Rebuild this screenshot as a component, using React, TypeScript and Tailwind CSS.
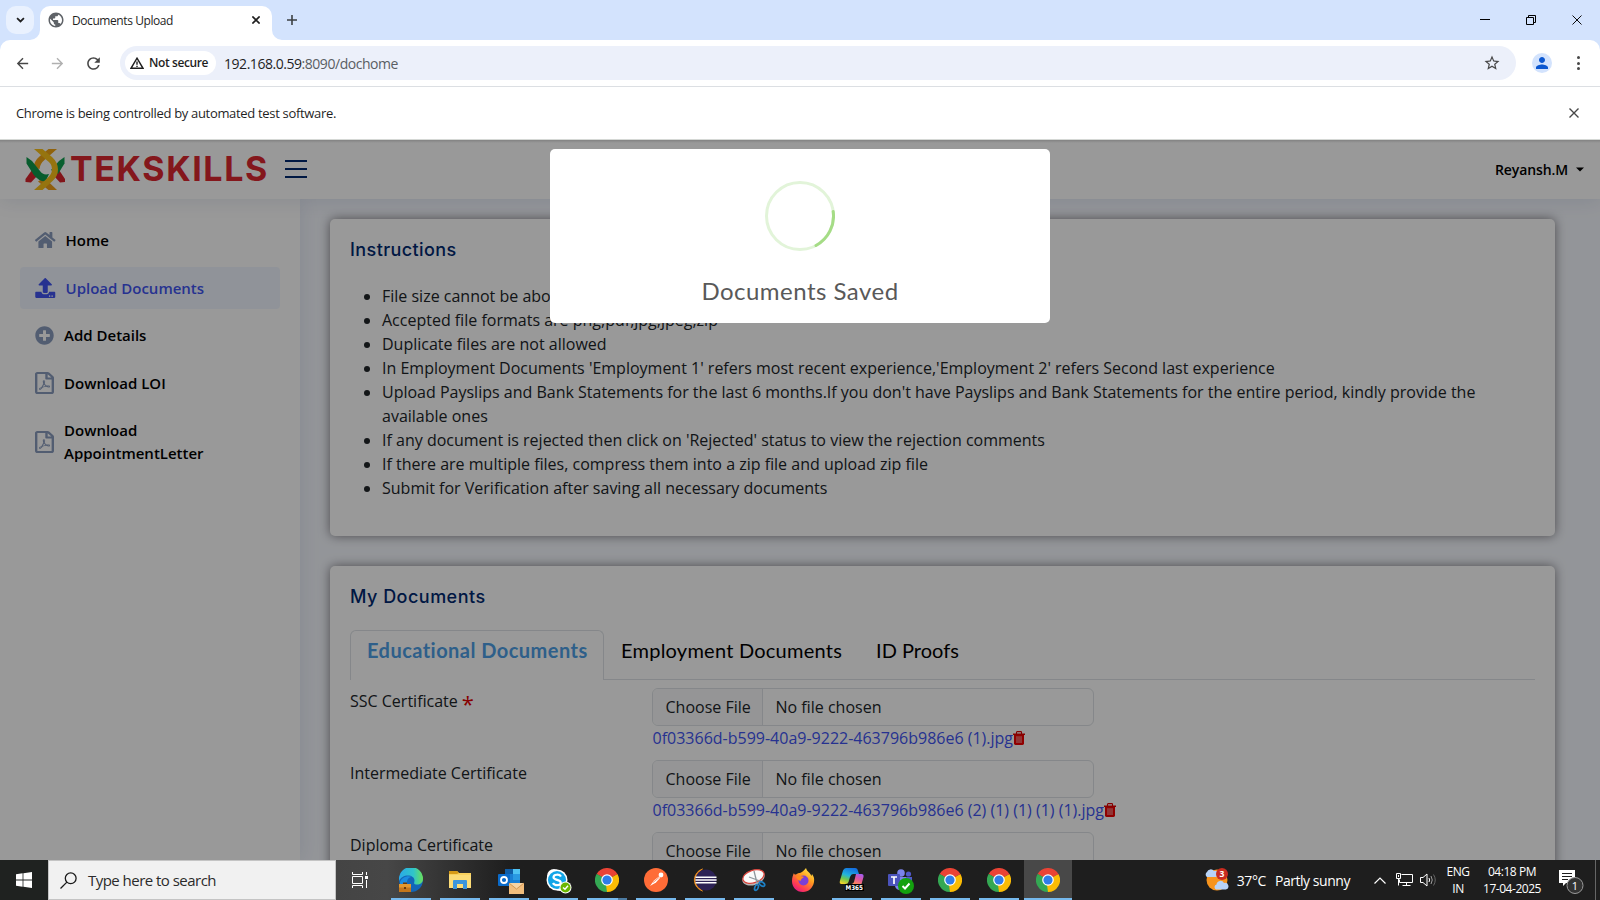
import type { ReactNode } from "react";
import { FaHome, FaUpload, FaPlusCircle, FaRegFilePdf } from "react-icons/fa";
import { MdArrowBack, MdArrowForward, MdRefresh, MdStarBorder, MdPerson, MdPublic } from "react-icons/md";

/* ---------- Browser chrome ---------- */

function Cross({ size, stroke, color }: { size: number; stroke: number; color: string }) {
  return (
    <svg width={size} height={size} viewBox="0 0 10 10" fill="none" stroke={color} strokeWidth={stroke}>
      <path d="M0.5 0.5 9.5 9.5M9.5 0.5 0.5 9.5" />
    </svg>
  );
}

function TabStrip() {
  return (
    <div className="flex h-10 shrink-0 items-start bg-[#d3e3fd]">
      <div className="mt-1.5 ml-1.5 flex h-7 w-7 items-center justify-center rounded-[10px] bg-[#e9f1fe]">
        <svg width="9" height="6" viewBox="0 0 10 7" fill="none" stroke="#1f1f1f" strokeWidth="2">
          <path d="M1 1.2 5 5.2 9 1.2" />
        </svg>
      </div>
      <svg className="mt-[30px] -ml-1 h-2.5 w-2.5" viewBox="0 0 10 10" fill="#fff">
        <path d="M10 0V10H0A10 10 0 0 0 10 0Z" />
      </svg>
      <div className="mt-1.5 flex h-[34px] w-[232px] items-center rounded-t-[10px] bg-white pl-[7px] pb-1.5">
        <MdPublic className="h-[18px] w-[18px] text-[#5f6368]" />
        <span className="ml-[7px] w-[180px] pt-0.5 text-[12px] tracking-[-0.42px] text-[#1f1f1f]">Documents Upload</span>
        <Cross size={8} stroke={2} color="#1f1f1f" />
      </div>
      <svg className="mt-[30px] h-2.5 w-2.5" viewBox="0 0 10 10" fill="#fff">
        <path d="M0 0V10H10A10 10 0 0 1 0 0Z" />
      </svg>
      <svg className="mt-[15px] ml-[5px]" width="10" height="10" viewBox="0 0 10 10" stroke="#3c4043" strokeWidth="1.6">
        <path d="M5 0V10M0 5H10" />
      </svg>
      <div className="mt-[15px] ml-auto flex items-center gap-9 pr-[18px]">
        <svg width="10" height="10" viewBox="0 0 10 10" stroke="#000">
          <path d="M0 4.5H10" />
        </svg>
        <svg width="10" height="10" viewBox="0 0 10 10" fill="none" stroke="#000">
          <path d="M0.5 2.5H7.5V9.5H0.5ZM2.5 2.5V0.5H9.5V7.5H7.5" />
        </svg>
        <Cross size={10} stroke={0.95} color="#000" />
      </div>
    </div>
  );
}

function Toolbar() {
  return (
    <div className="h-[46px] shrink-0 bg-[#d3e3fd]">
      <div className="flex h-[46px] items-center rounded-t-[10px] bg-white">
        <MdArrowBack className="ml-3.5 h-[17px] w-[17px] text-[#474747]" />
        <MdArrowForward className="ml-[18px] h-[17px] w-[17px] text-[#b0b0b0]" />
        <MdRefresh className="ml-[18px] h-[19px] w-[19px] text-[#474747]" />
        <div className="ml-[17px] flex h-[34px] w-[1396px] items-center rounded-full bg-[#ecf0fa] px-[5px]">
          <div className="flex h-6 w-[91px] items-center rounded-full bg-white pl-[5px]">
            <svg width="14" height="12" viewBox="0 0 14 12" fill="none" stroke="#1f1f1f" strokeWidth="1.4">
              <path d="M7 1.2 13 11.3H1ZM7 4.4V7.8M7 8.7V10" />
            </svg>
            <span className="ml-[5px] text-[12px] font-semibold tracking-[-0.4px] text-[#1f1f1f]">Not secure</span>
          </div>
          <span className="ml-2 text-[14px] tracking-[-0.46px] text-[#1f1f1f]">
            192.168.0.59<span className="text-[#5a5e63]">:8090/dochome</span>
          </span>
          <MdStarBorder className="mr-[10px] ml-auto h-[18px] w-[18px] text-[#474747]" />
        </div>
        <div className="ml-4 flex h-5 w-5 items-center justify-center rounded-full bg-[#d3e3fd]">
          <MdPerson className="h-[18px] w-[18px] text-[#0b57d0]" />
        </div>
        <div className="ml-[24.5px] flex flex-col gap-[2.5px]">
          <i className="h-[3px] w-[3px] rounded-full bg-[#474747]" />
          <i className="h-[3px] w-[3px] rounded-full bg-[#474747]" />
          <i className="h-[3px] w-[3px] rounded-full bg-[#474747]" />
        </div>
      </div>
    </div>
  );
}

function InfoBar() {
  return (
    <div className="flex h-[53px] shrink-0 items-center border-t border-[#dcdfe3] bg-white pr-[21px] pl-4">
      <span className="pt-0.5 text-[13px] tracking-[-0.32px] text-[#1f1f1f]">
        Chrome is being controlled by automated test software.
      </span>
      <span className="ml-auto">
        <Cross size={10} stroke={1.4} color="#474747" />
      </span>
    </div>
  );
}

/* ---------- Portal page ---------- */

function LogoMark() {
  return (
    <svg width="41" height="43" viewBox="0 0 41 43" fill="none">
      <path d="M0.500 31 7 22 13 27 6 34.500 0.500 34Z" fill="#d9232c" />
      <path d="M40 31 34 22 28 27 35 34.500 40 34Z" fill="#d9232c" />
      <path d="M39.500 9V15.500L33 26 26 22 34 13Z" fill="#0f9f4f" />
      <path d="M23.500 1H32L20 11.500Q15 15.500 14.500 21L8.500 20Q9 13 15 8Z" fill="#f0a414" />
      <path d="M32 42H23.500L13 33.500 19 29.500Z" fill="#ef9f18" />
      <path d="M1.500 9 7 13 15 23Q18 27.500 24 26L20.500 33.500Q13 33 8.500 26.500L1.500 15.500Z" fill="#0d9a4b" />
      <path d="M9 1H17.500L27 9Q33 14.500 33 21.500T27 33.500L17.500 42H9L22 30.500Q27 26.500 27 21T21.500 12Z" fill="#fbc21a" />
    </svg>
  );
}

function PageHeader() {
  return (
    <header className="relative z-10 flex h-[60px] shrink-0 items-center bg-white pl-[25px] shadow-[0_2px_20px_rgba(1,41,112,0.1)]">
      <LogoMark />
      <span className="ml-1 w-[198px] font-['Inter',sans-serif] text-[34px] leading-none font-bold tracking-[1.6px] text-[#dd2730]">
        TEKSKILLS
      </span>
      <svg className="ml-[17px]" width="22" height="18" viewBox="0 0 22 18" stroke="#012970" strokeWidth="2">
        <path d="M0 1H22M0 9H22M0 17H22" />
      </svg>
      <span className="ml-auto text-[14px] font-semibold tracking-[-0.1px] text-black">Reyansh.M</span>
      <svg className="mr-4 ml-2" width="8" height="5" viewBox="0 0 8 5">
        <path d="M0 0.5H8L4 4.5Z" fill="#000" />
      </svg>
    </header>
  );
}

function NavItem({ icon, children, active }: { icon: ReactNode; children: ReactNode; active?: boolean }) {
  return (
    <li
      className={
        active
          ? "mb-[5px] flex items-center rounded-[4px] bg-[#f0f6ff] px-[15px] py-2.5 text-[#4154f1]"
          : "mb-[5px] flex items-center rounded-[4px] px-[15px] py-2.5 text-black"
      }
    >
      {icon}
      <span className="text-[15px] leading-[22.5px] font-semibold">{children}</span>
    </li>
  );
}

function Sidebar() {
  return (
    <aside className="w-[300px] shrink-0 bg-white p-5 shadow-[0_0_20px_rgba(1,41,112,0.1)]">
      <ul>
        <NavItem icon={<FaHome className="mr-2.5 h-[20px] w-[20.500px] text-[#899bbd]" />}>Home</NavItem>
        <NavItem active icon={<FaUpload className="mr-2.5 h-[20px] w-[20.500px] text-[#4154f1]" />}>
          Upload Documents
        </NavItem>
        <NavItem icon={<FaPlusCircle className="mr-2.5 h-[19px] w-[19px] text-[#899bbd]" />}>Add Details</NavItem>
        <NavItem
          icon={<FaRegFilePdf preserveAspectRatio="none" className="mr-2.5 h-[22px] w-[19px] text-[#899bbd]" />}
        >
          Download LOI
        </NavItem>
        <NavItem
          icon={<FaRegFilePdf preserveAspectRatio="none" className="mr-2.5 h-[22px] w-[19px] text-[#899bbd]" />}
        >
          Download
          <br />
          AppointmentLetter
        </NavItem>
      </ul>
    </aside>
  );
}

function Card({ title, children }: { title: ReactNode; children: ReactNode }) {
  return (
    <section className="mb-[30px] rounded-[5px] bg-white px-5 pb-5 shadow-[0_0_11px_rgba(50,45,50,0.6)]">
      <h5 className="pt-5 pb-[15px] font-['Inter',sans-serif] text-[18px] leading-[21.6px] font-medium text-[#012970]">
        {title}
      </h5>
      {children}
    </section>
  );
}

const instructions = [
  "File size cannot be above 5 MB",
  "Accepted file formats are png,pdf,jpg,jpeg,zip",
  "Duplicate files are not allowed",
  "In Employment Documents 'Employment 1' refers most recent experience,'Employment 2' refers Second last experience",
  "Upload Payslips and Bank Statements for the last 6 months.If you don't have Payslips and Bank Statements for the entire period, kindly provide the available ones",
  "If any document is rejected then click on 'Rejected' status to view the rejection comments",
  "If there are multiple files, compress them into a zip file and upload zip file",
  "Submit for Verification after saving all necessary documents",
];

function TrashIcon() {
  return (
    <svg className="mt-[5px]" width="12" height="14" viewBox="0 0 12 14" fill="none">
      <path d="M3.5 3V1.3Q3.5 0.6 4.2 0.6H7.8Q8.5 0.6 8.5 1.3V3" stroke="#e00000" strokeWidth="1.1" />
      <path d="M0 2.5H12V4H0Z" fill="#e00000" />
      <path d="M1 4H11V12.6Q11 14 9.6 14H2.4Q1 14 1 12.6Z" fill="#f00000" />
      <path d="M4 5.2V12M6 5.2V12M8 5.2V12" stroke="#f5b5b5" strokeWidth="1" />
    </svg>
  );
}

function DocumentRow({ label, required, file }: { label: string; required?: boolean; file?: string }) {
  return (
    <div className="mb-2.5 flex">
      <div className="flex h-[26px] w-[302px] shrink-0 gap-1 pt-px leading-6">
        {label}
        {required && <span className="pt-0.5 text-[22px] leading-6 text-[#e00000]">*</span>}
      </div>
      <div>
        <div className="flex h-[38px] w-[442px] items-center rounded-[6px] border border-[#dee2e6] bg-white">
          <span className="flex h-full w-[110px] items-center rounded-l-[5px] border-r border-[#dee2e6] bg-[#f8f9fa] pl-[12.5px]">
            Choose File
          </span>
          <span className="pl-[12.5px]">No file chosen</span>
        </div>
        {file && (
          <div className="flex h-6 pl-[0.5px] leading-6 text-[#4154f1]">
            {file}
            <TrashIcon />
          </div>
        )}
      </div>
    </div>
  );
}

function Tabs() {
  return (
    <div className="mb-2 flex h-[50px] font-['Lato',sans-serif] text-[20px] leading-6 text-black">
      <div className="w-[254px] rounded-t-[6px] border border-b-0 border-[#dee2e6] pt-[7px] pl-4 font-bold tracking-[0.46px] text-[#4e9fe6]">
        Educational Documents
      </div>
      <div className="flex grow gap-[34px] border-b border-[#dee2e6] pt-[7.5px] pl-[17px]">
        <span className="tracking-[0.24px]">Employment Documents</span>
        <span>ID Proofs</span>
      </div>
    </div>
  );
}

function Dialog() {
  return (
    <div className="absolute inset-0 z-20 flex justify-center bg-black/40 pt-2.5">
      <div className="flex h-[174px] w-[500px] flex-col items-center rounded-[5px] bg-white pt-8">
        <svg width="70" height="70" viewBox="0 0 70 70" fill="none" strokeWidth="3">
          <circle cx="35" cy="35" r="33.5" stroke="#e2f4d9" />
          <path d="M68.2 30.5A33.5 33.5 0 0 1 51 64.5" stroke="#a5dc86" strokeLinecap="round" />
        </svg>
        <h2 className="mt-6 font-['Lato',sans-serif] text-[24px] leading-8 tracking-[0.48px] text-[#595959]">
          Documents Saved
        </h2>
      </div>
    </div>
  );
}

function Page() {
  return (
    <div className="relative flex h-[721px] shrink-0 flex-col overflow-hidden bg-[#f6f9ff]">
      <PageHeader />
      <div className="flex min-h-0 grow">
        <Sidebar />
        <main className="w-[1255px] shrink-0 overflow-visible pt-5 pl-[30px] text-[16px] text-[#212529]">
          <Card title={<span className="tracking-[0.4px]">Instructions</span>}>
            <ul className="mt-2 mb-4 list-disc pl-8 leading-6">
              {instructions.map((text) => (
                <li key={text}>{text}</li>
              ))}
            </ul>
          </Card>
          <Card title={<span className="tracking-[0.48px]">My Documents</span>}>
            <div className="mt-2">
              <Tabs />
              <DocumentRow label="SSC Certificate" required file="0f03366d-b599-40a9-9222-463796b986e6 (1).jpg" />
              <DocumentRow
                label="Intermediate Certificate"
                file="0f03366d-b599-40a9-9222-463796b986e6 (2) (1) (1) (1) (1).jpg"
              />
              <DocumentRow label="Diploma Certificate" />
            </div>
          </Card>
        </main>
      </div>
      <Dialog />
      <div className="absolute inset-x-0 top-0 z-30 h-1 border-t border-[#d5d8d5] bg-linear-to-b from-black/15 to-transparent" />
    </div>
  );
}

/* ---------- Taskbar ---------- */

function ChromeIcon() {
  return (
    <svg width="24" height="24" viewBox="0 0 24 24">
      <path d="M12 12 1.6 6A12 12 0 0 1 22.4 6Z" fill="#ea4335" />
      <path d="M12 12 22.4 6A12 12 0 0 1 12 24Z" fill="#fbbc05" />
      <path d="M12 12V24A12 12 0 0 1 1.6 6Z" fill="#34a853" />
      <path d="M12 6.5H22.7L22.4 6H12Z" fill="#ea4335" />
      <path d="M1.6 6 7.2 14.8 12 12Z" fill="#34a853" />
      <path d="M16.8 14.8 12 24 11 17Z" fill="#fbbc05" />
      <circle cx="12" cy="12" r="5.8" fill="#fff" />
      <circle cx="12" cy="12" r="4.6" fill="#2f7de9" />
    </svg>
  );
}

function EdgeIcon() {
  return (
    <svg width="24" height="24" viewBox="0 0 24 24">
      <defs>
        <linearGradient id="edgeTop" x1="0" x2="1">
          <stop offset="0" stopColor="#2aa9e8" />
          <stop offset="0.6" stopColor="#30c5c9" />
          <stop offset="1" stopColor="#6ae05a" />
        </linearGradient>
      </defs>
      <circle cx="12" cy="12" r="12" fill="#1366b8" />
      <path d="M0 11A12 12 0 0 1 24 11C24 15 20.5 17 17 16.5C14 16 15.5 14.5 15.5 12.5C15.5 9.5 12.5 7.5 9 7.5C5 7.5 1.500 9.500 0 13Z" fill="url(#edgeTop)" />
      <path d="M8 15C8 11 10 9 13 9C9 7 3 9 1 14V16H8Z" fill="#1b8be0" />
      <path d="M0 16H12V24H0Z" fill="#c5761b" />
      <path d="M0 16H12V19.500H0Z" fill="#e3982e" />
      <path d="M4 16V14.500H8V16M5 19H7V21H5Z" fill="#6b3a08" />
    </svg>
  );
}

function FolderIcon() {
  return (
    <svg width="22" height="20" viewBox="0 0 22 20">
      <path d="M0 1H8L10 3H22V18H0Z" fill="#f9d15e" />
      <path d="M0 1H8L10 3 8 4H0Z" fill="#d79b17" />
      <path d="M0 5H22V18H0Z" fill="#fcdc77" />
      <path d="M4 19V11Q4 10 5 10H17Q18 10 18 11V19H14V14H8V19Z" fill="#3b95dc" />
    </svg>
  );
}

function OutlookIcon() {
  return (
    <svg className="mt-0.5 ml-1" width="26" height="26" viewBox="0 0 26 26">
      <path d="M7 1H22V18H7Z" fill="#1a7fd4" />
      <path d="M15 1H22V6H15Z" fill="#4fc3f3" />
      <path d="M15 6H22V12H15Z" fill="#2a9ae3" />
      <path d="M7 1H15V6H7Z" fill="#0f5ea8" />
      <rect x="0" y="6" width="12" height="12" rx="1" fill="#0a6ac9" />
      <circle cx="6" cy="12" r="3" fill="none" stroke="#fff" strokeWidth="1.800" />
      <path d="M11 15H26V26H11Z" fill="#f2bd7c" />
      <path d="M11 15 18.500 21 26 15" fill="#f7d3a3" stroke="#c98b45" strokeWidth="0.800" />
    </svg>
  );
}

function SkypeIcon() {
  return (
    <svg className="mt-0.5 ml-0.5" width="26" height="26" viewBox="0 0 26 26">
      <circle cx="8" cy="8" r="7" fill="#fff" />
      <circle cx="14" cy="16" r="7" fill="#fff" />
      <circle cx="11" cy="12" r="10.500" fill="#fff" />
      <circle cx="11" cy="12" r="9" fill="#12a5e8" />
      <path d="M15 8.500C13.500 6 7.500 6 7.500 9.300C7.500 12.500 14.800 11.200 14.800 14.700C14.800 18 8.500 18 7 15" fill="none" stroke="#fff" strokeWidth="2.200" />
      <circle cx="19.500" cy="19.500" r="6" fill="#fff" />
      <circle cx="19.500" cy="19.500" r="5" fill="#6bb700" />
      <path d="M17 19.500 19 21.300 22 17.800" fill="none" stroke="#fff" strokeWidth="1.400" />
    </svg>
  );
}

function PostmanIcon() {
  return (
    <svg width="24" height="24" viewBox="0 0 24 24">
      <circle cx="12" cy="12" r="12" fill="#ff6c37" />
      <path d="M6 18 10 12.500 15 8.500 16 10 12 14.500Z" fill="#fff" />
      <circle cx="17" cy="7" r="2.400" fill="#fff" />
      <path d="M9 14.500 15 9.500" stroke="#ff6c37" strokeWidth="0.700" />
    </svg>
  );
}

function EclipseIcon() {
  return (
    <svg width="24" height="24" viewBox="0 0 24 24">
      <path d="M9.500 1A11.500 11.500 0 0 0 9.500 23A13.500 13.500 0 0 1 9.500 1Z" fill="#f7941e" stroke="#f7941e" strokeWidth="0.800" />
      <circle cx="13" cy="12" r="10.600" fill="#2c2255" />
      <path d="M2.500 9.300H23.500M2.400 12H23.600M2.500 14.700H23.500" stroke="#fff" strokeWidth="1.500" />
    </svg>
  );
}

function SnipIcon() {
  return (
    <svg width="24" height="24" viewBox="0 0 24 24">
      <ellipse cx="11.500" cy="10" rx="11.500" ry="7" transform="rotate(-18 11.500 10)" fill="#b5b5b5" />
      <ellipse cx="11.500" cy="8.500" rx="11" ry="6.300" transform="rotate(-18 11.500 8.500)" fill="#fafafa" stroke="#d9433b" strokeWidth="1.300" />
      <path d="M12 3 15 15M7 9 18 13" stroke="#8d969c" strokeWidth="1.300" />
      <ellipse cx="14.500" cy="19.500" rx="1.700" ry="3" transform="rotate(20 14.500 19.500)" fill="none" stroke="#1d7fc4" strokeWidth="1.700" />
      <ellipse cx="20" cy="16" rx="3" ry="1.800" transform="rotate(35 20 16)" fill="none" stroke="#1d7fc4" strokeWidth="1.700" />
    </svg>
  );
}

function FirefoxIcon() {
  return (
    <svg width="24" height="24" viewBox="0 0 24 24">
      <defs>
        <linearGradient id="fox" x1="0.850" y1="0" x2="0.200" y2="1">
          <stop offset="0" stopColor="#fff04a" />
          <stop offset="0.400" stopColor="#ff9a1f" />
          <stop offset="0.750" stopColor="#ff4050" />
          <stop offset="1" stopColor="#e31587" />
        </linearGradient>
      </defs>
      <path d="M3 5C3 6 3.500 6.500 5 6.500C6.500 5 8 5 9 5C11 4.500 13 2.500 15 0C16 4 19 4 20.500 8L21 6C23 8.500 23.500 11 23 14C22 20 17.500 24 12 24C5 24 1 19 1 13C1 9.500 2 7 3 5Z" fill="url(#fox)" />
      <circle cx="12.500" cy="12.500" r="5" fill="#7a3fd6" />
      <path d="M5 8.500C8 7 10 8 13 9C11 10.500 10 11 9.500 13C7 12.500 5.500 10.500 5 8.500Z" fill="#ff8a1c" />
    </svg>
  );
}

function CopilotIcon() {
  return (
    <svg width="26" height="26" viewBox="0 0 26 26">
      <defs>
        <linearGradient id="cpA" x1="0.600" y1="0" x2="0.200" y2="1">
          <stop offset="0" stopColor="#1470e0" />
          <stop offset="0.450" stopColor="#22b4dc" />
          <stop offset="0.700" stopColor="#6cc84f" />
          <stop offset="1" stopColor="#f4d32a" />
        </linearGradient>
        <linearGradient id="cpB" x1="0.800" y1="0" x2="0.300" y2="1">
          <stop offset="0" stopColor="#a35cf2" />
          <stop offset="0.500" stopColor="#e0569c" />
          <stop offset="1" stopColor="#ff8a57" />
        </linearGradient>
      </defs>
      <path d="M7 1H16Q18.500 1 19 4L20 7H14Q12 7 11 10L9.500 15Q9 17 6.500 17H2.500Q0 17 1 13.500L4 3.500Q5 1 7 1Z" fill="url(#cpA)" />
      <path d="M17 7H22.500Q25 7 24.500 10L22.500 17H12Q15 17 15.500 13Z" fill="url(#cpB)" />
      <rect x="6" y="17" width="19" height="7" fill="#000" />
      <text x="6.500" y="23" fontFamily="DejaVu Sans" fontWeight="700" fontSize="6.500" textLength="17.500" lengthAdjust="spacingAndGlyphs" fill="#fff">
        M365
      </text>
    </svg>
  );
}

function TeamsIcon() {
  return (
    <svg className="mt-0.5" width="26" height="26" viewBox="0 0 26 26">
      <circle cx="13" cy="5" r="3.800" fill="#7b83eb" />
      <circle cx="20.500" cy="6" r="2.600" fill="#5059c9" />
      <path d="M15 9H24V15Q24 19 19 19H15Z" fill="#5059c9" />
      <path d="M7 9H18V17Q17 22 12 22 8 22 7 18Z" fill="#7b83eb" />
      <rect x="0" y="6" width="12" height="12" rx="1" fill="#4b53bc" />
      <path d="M3 9H9M6 9V16" stroke="#fff" strokeWidth="1.700" />
      <circle cx="18" cy="18" r="8" fill="#13a10e" />
      <path d="M14.500 18 17 20.500 21.500 15.500" fill="none" stroke="#fff" strokeWidth="1.900" />
    </svg>
  );
}

function TaskItem({ children, running, active, stacked }: { children: ReactNode; running?: boolean; active?: boolean; stacked?: boolean }) {
  return (
    <div className={active ? "flex h-10 w-12 flex-col items-center bg-[#484848]" : "flex h-10 w-12 flex-col items-center"}>
      <div className="flex h-[38px] items-center justify-center pt-0.5">{children}</div>
      <div className="flex h-0.5">
        {running && <i className={stacked ? "h-0.5 w-[31px] bg-[#76b9ed]" : active ? "h-0.5 w-12 bg-[#76b9ed]" : "h-0.5 w-10 bg-[#76b9ed]"} />}
        {stacked && <i className="h-0.5 w-[9px] bg-[#4d7ca3]" />}
      </div>
    </div>
  );
}

function WeatherIcon() {
  return (
    <svg width="25" height="24" viewBox="0 0 25 24">
      <circle cx="13" cy="12" r="10.500" fill="#f7941d" />
      <path d="M3 9A3 3 0 0 1 3 4 4 4 0 0 1 10 3 3 3 0 0 1 12 9Z" fill="#b8d3f7" />
      <path d="M12 21.500A2.700 2.700 0 0 1 12.500 16.500 4 4 0 0 1 20 15 3.300 3.300 0 0 1 22 21.500Z" fill="#b8d3f7" />
      <circle cx="18" cy="6" r="6" fill="#c92c20" />
      <text x="18" y="9" textAnchor="middle" fontFamily="Open Sans" fontWeight="700" fontSize="8.500" fill="#fff">
        3
      </text>
    </svg>
  );
}

function Tray() {
  return (
    <div className="ml-auto flex h-10 items-center pr-1 text-white">
      <WeatherIcon />
      <span className="ml-2 text-[14px] tracking-[-0.4px]">37°C</span>
      <span className="ml-[9px] text-[14px] tracking-[-0.46px]">Partly sunny</span>
      <svg className="ml-6" width="12" height="7" viewBox="0 0 12 7" fill="none" stroke="#fff" strokeWidth="1.200">
        <path d="M0.500 6.500 6 1 11.500 6.500" />
      </svg>
      <svg className="ml-2.5" width="17" height="14" viewBox="0 0 17 14" fill="none" stroke="#fff">
        <path d="M5.500 1.500H16.500V9.500H3.500V6.500M10.500 9.500V12.500M6.500 12.500H14.500M0.500 0.500H4.500V5.500H0.500ZM2.500 5.500V12.500M2.500 2V4" />
      </svg>
      <svg className="ml-[7px]" width="17" height="14" viewBox="0 0 17 14" fill="none" stroke="#fff">
        <path d="M0.500 4.500H3L7 1V13L3 9.500H0.500Z" />
        <path d="M9 5Q10.200 7 9 9" />
        <path d="M11 3Q13.500 7 11 11" stroke="#a0a0a0" />
        <path d="M13.500 1.500Q17 7 13.500 12.500" stroke="#666" />
      </svg>
      <div className="ml-[9px] flex w-6 flex-col items-center text-[12px] leading-[17px] tracking-[-0.4px]">
        <span>ENG</span>
        <span>IN</span>
      </div>
      <div className="ml-[12px] flex w-[60px] flex-col items-center text-[12px] leading-[17px] tracking-[-0.46px]">
        <span>04:18 PM</span>
        <span>17-04-2025</span>
      </div>
      <svg className="mt-1 ml-[17px]" width="25" height="26" viewBox="0 0 25 26">
        <path d="M0 1H16V14H7L4 17V14H0Z" fill="#fff" />
        <path d="M3 4.500H13M3 7.500H13M3 10.500H9" stroke="#1e1e1e" />
        <circle cx="16" cy="16.500" r="8" fill="#333" stroke="#9a9a9a" />
        <text x="16" y="20.500" textAnchor="middle" fontFamily="Open Sans" fontSize="11" fill="#fff">
          1
        </text>
      </svg>
      <i className="ml-[11px] h-10 w-px bg-[#666]" />
    </div>
  );
}

function Taskbar() {
  return (
    <div className="flex h-10 shrink-0 bg-[#1e1e1e]">
      <div className="flex w-12 items-center justify-center bg-[#1f2220]">
        <svg width="16" height="16" viewBox="0 0 16 16" fill="#fff">
          <path d="M0 2.300 6.600 1.300V7.600H0ZM7.400 1.200 16 0V7.600H7.400ZM0 8.400H6.600V14.700L0 13.700ZM7.400 8.400H16V16L7.400 14.800Z" />
        </svg>
      </div>
      <div className="flex w-72 items-center border border-[#c4c4c4] bg-[#f1f1f1] pl-[11px]">
        <svg width="17" height="17" viewBox="0 0 17 17" fill="none" stroke="#1a1a1a" strokeWidth="1.300">
          <circle cx="10.700" cy="6.300" r="5.400" />
          <path d="M6.900 10.100 0.500 16.500" />
        </svg>
        <span className="ml-[11px] text-[15px] tracking-[-0.53px] text-[#2b2b2b]">Type here to search</span>
      </div>
      <div className="flex w-[51px] items-center bg-linear-to-r from-[#444] to-[#474747] pl-4">
        <svg width="17" height="16" viewBox="0 0 17 16" fill="none" stroke="#fff">
          <path d="M0.500 0V2.500H10.500V0M0.500 4.500H10.500V11.500H0.500ZM0.500 16V13.500H10.500V16M14.500 0V3M14.500 8V16" />
          <path d="M13 4H16V7H13Z" fill="#fff" stroke="none" />
        </svg>
      </div>
      <div className="flex gap-px bg-linear-to-r from-[#474747] via-[#1e1e1e] via-18% to-[#1e1e1e]">
        <TaskItem running><EdgeIcon /></TaskItem>
        <TaskItem running><FolderIcon /></TaskItem>
        <TaskItem running><OutlookIcon /></TaskItem>
        <TaskItem running><SkypeIcon /></TaskItem>
        <TaskItem running stacked><ChromeIcon /></TaskItem>
        <TaskItem running><PostmanIcon /></TaskItem>
        <TaskItem running><EclipseIcon /></TaskItem>
        <TaskItem running><SnipIcon /></TaskItem>
        <TaskItem><FirefoxIcon /></TaskItem>
        <TaskItem running><CopilotIcon /></TaskItem>
        <TaskItem running><TeamsIcon /></TaskItem>
        <TaskItem running><ChromeIcon /></TaskItem>
        <TaskItem running><ChromeIcon /></TaskItem>
        <TaskItem running active><ChromeIcon /></TaskItem>
      </div>
      <Tray />
    </div>
  );
}

export default function App() {
  return (
    <div className="flex h-[900px] w-[1600px] flex-col overflow-hidden bg-white font-['Open_Sans',sans-serif] whitespace-nowrap">
      <TabStrip />
      <Toolbar />
      <InfoBar />
      <div className="flex shrink-0 flex-col whitespace-normal">
        <Page />
      </div>
      <Taskbar />
    </div>
  );
}
